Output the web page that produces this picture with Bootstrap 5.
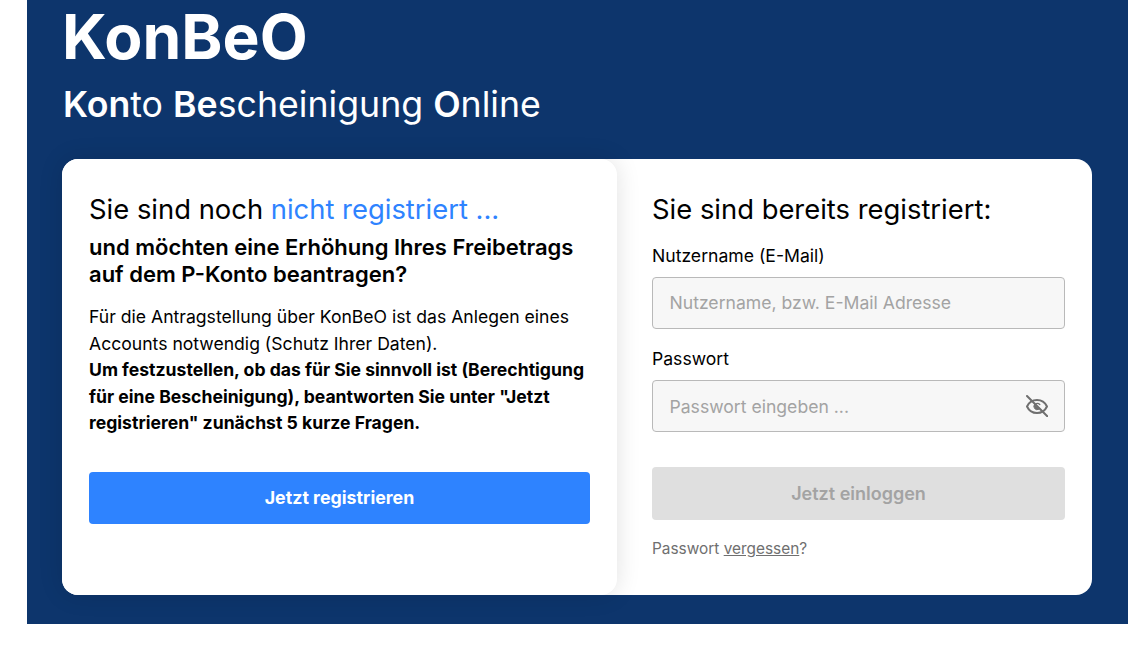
<!DOCTYPE html>
<html lang="de">
<head>
<meta charset="utf-8">
<title>KonBeO</title>
<link href="https://cdn.jsdelivr.net/npm/bootstrap@5.3.0/dist/css/bootstrap.min.css" rel="stylesheet">
<style>
html,body{height:650px;overflow:hidden;background:#fff}
body{font-family:Inter,"Liberation Sans",sans-serif;color:#000}
.hero-band{margin-left:27px;height:624px;background:#0d356c;padding:0 35px;overflow:hidden}
.brand-title{font-size:62.300px;font-weight:700;line-height:72px;margin:0;padding-top:1px;height:74px;color:#fff}
.brand-sub{font-size:35.7px;font-weight:400;line-height:40px;margin:10px 0 35px 1px;height:40px;color:#fff}
.brand-sub b{font-weight:600}
.panel-pair{width:1030px;height:436px;background:#fff;border-radius:16px}
.panel-left{width:555px;flex:none;background:#fff;border-radius:16px;padding:31px 27px 0;box-shadow:0 0 24px rgba(0,0,0,.12);position:relative}
.panel-right{flex:1;padding:31px 27px 0 35px}
.panel-head{font-size:27.4px;font-weight:400;line-height:38px;margin:0;color:#000}
.accent{color:#2e83ff}
.panel-sub{font-size:22px;font-weight:600;line-height:27px;margin:6px 0 16px}
.panel-copy{font-size:17.6px;line-height:26.5px;margin:0 0 35px}
.panel-copy b{font-weight:700}
.cta{display:block;width:100%;height:52px;background:#2e83ff;border:0;border-radius:4px;color:#fff;font-size:17.8px;font-weight:700;line-height:52px;padding:0}
.field-label{display:block;font-size:17.6px;line-height:24px;margin:0 0 9px;color:#000}
.field-input{height:52px;background:#f7f7f7;border:1px solid #b9b9b9;border-radius:4px;font-size:17.6px;padding:0 16.500px 1px;color:#000;box-shadow:none}
.field-input.pw-input{padding:1px 16.500px 0}
.field-input::placeholder{color:#a3a3a3;opacity:1}
.field-wrap{position:relative;margin-bottom:18px}
.eye{position:absolute;right:17px;top:15px;width:22px;height:22px;color:#6f6f6f}
.login-btn,.login-btn:disabled{display:block;width:100%;height:53px;background:#dfdfdf;border:0;border-radius:4px;color:#a3a3a3;font-size:18px;font-weight:600;padding:0 0 1px;margin-top:35px;opacity:1}
.forgot{font-size:15.4px;line-height:20px;color:#6f6f6f;margin:19px 0 0}
.forgot a{color:#6f6f6f}
.head-gap{margin-bottom:16px}
</style>
</head>
<body>
<div class="hero-band">
  <h1 class="brand-title">KonBeO</h1>
  <h2 class="brand-sub"><b>Kon</b>to <b>Be</b>scheinigung <b>O</b>nline</h2>
  <div class="panel-pair d-flex">
    <section class="panel-left">
      <h3 class="panel-head">Sie sind noch <span class="accent">nicht registriert ...</span></h3>
      <h4 class="panel-sub">und möchten eine Erhöhung Ihres Freibetrags<br>auf dem P-Konto beantragen?</h4>
      <p class="panel-copy">Für die Antragstellung über KonBeO ist das Anlegen eines Accounts notwendig (Schutz Ihrer Daten).<br><b>Um festzustellen, ob das für Sie sinnvoll ist (Berechtigung für eine Bescheinigung), beantworten Sie unter "Jetzt registrieren" zunächst 5 kurze Fragen.</b></p>
      <button type="button" class="btn cta">Jetzt registrieren</button>
    </section>
    <section class="panel-right">
      <h3 class="panel-head head-gap">Sie sind bereits registriert:</h3>
      <form>
        <label class="field-label" for="u">Nutzername (E-Mail)</label>
        <div class="field-wrap"><input id="u" class="form-control field-input" type="text" placeholder="Nutzername, bzw. E-Mail Adresse"></div>
        <label class="field-label" for="p">Passwort</label>
        <div class="field-wrap">
          <input id="p" class="form-control field-input pw-input" type="password" placeholder="Passwort eingeben ...">
          <svg class="eye" viewBox="0 0 22 22" fill="none" stroke="currentColor" stroke-width="2" stroke-linecap="round" stroke-linejoin="round" aria-hidden="true">
            <path d="M1 11.500C3 7.300 6.500 5 11 5s8 2.300 10 6.500c-2 4.200-5.500 6.500-10 6.500s-8-2.300-10-6.500z"/>
            <path d="M13.800 9.500a3.300 3.300 0 0 0-4.600 0" stroke-width="1.300"/>
            <path d="M8.500 9.300a3.400 3.400 0 0 0 4.400 5z" fill="currentColor" stroke-width="1"/>
            <path d="M1 1 21.500 21.500"/>
          </svg>
        </div>
        <button type="button" class="btn login-btn" disabled>Jetzt einloggen</button>
        <p class="forgot">Passwort <a href="#">vergessen</a>?</p>
      </form>
    </section>
  </div>
</div>
</body>
</html>
